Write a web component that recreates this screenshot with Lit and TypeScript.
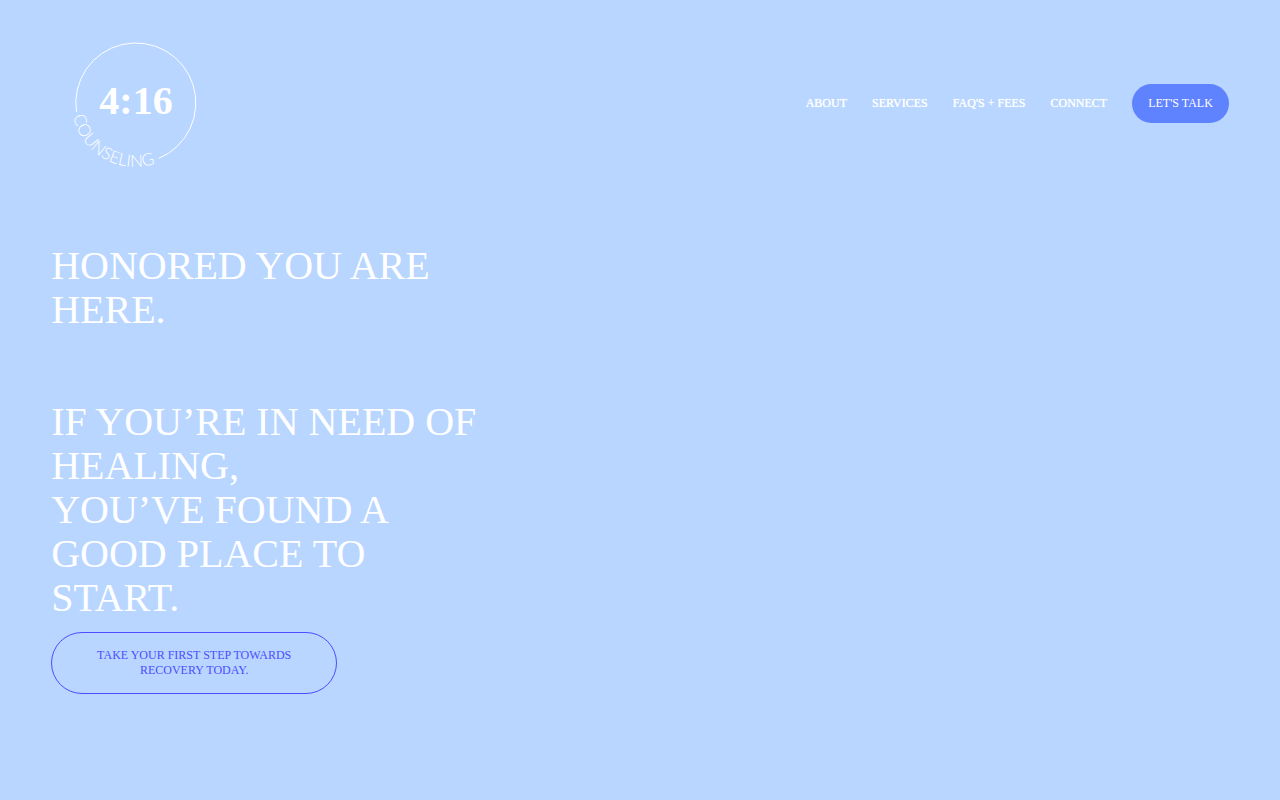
import { LitElement, html, css } from "lit";
import { customElement } from "lit/decorators.js";

@customElement("app-root")
export class AppRoot extends LitElement {
  static styles = css`
    :host {
      display: block;
      min-height: 100vh;
      background: #b8d6ff;
      color: #fff;
      font-family: "Liberation Serif", "Times New Roman", serif;
    }
    * { box-sizing: border-box; }
    a { color: inherit; text-decoration: none; }
    header {
      display: flex;
      align-items: center;
      justify-content: space-between;
      padding: 19px 4vw;
    }
    .logo { display: block; height: 168px; }
    .logo svg { display: block; }
    .digits { font-size: 40px; font-weight: 700; }
    .name { font-family: Lato, sans-serif; font-size: 17px; font-weight: 300; }
    nav {
      display: flex;
      align-items: center;
      gap: 25px;
      font-size: 12px;
      line-height: 15px;
    }
    .link { text-shadow: 0 0 1px #fff; }
    .talk {
      padding: 12px 16px;
      border-radius: 20px;
      background: #5f82ff;
    }
    main { padding: 38px 4vw; }
    .copy { width: 37%; min-width: 285px; }
    h1, h2 { margin: 0; font-size: 40px; line-height: 44px; font-weight: 400; }
    h2 { margin-top: 68px; }
    .start {
      display: block;
      width: 286px;
      margin-top: 12px;
      padding: 15px 40px;
      border: 1px solid #4b4dff;
      border-radius: 31px;
      color: #4b4dff;
      font-size: 12px;
      line-height: 15px;
      text-align: center;
    }
  `;

  private links = ["ABOUT", "SERVICES", "FAQ'S + FEES", "CONNECT"];

  render() {
    return html`
      <header>
        <a class="logo" href="#" aria-label="4:16 Counseling">
          <svg width="168" height="168" viewBox="51 19 168 168" fill="#fff">
            <path d="M76.500 112A60 60 0 1 1 158.500 158.500" fill="none" stroke="#fff" stroke-width="1" />
            <path id="arc" d="M72 104A63 63 0 0 0 180 148" fill="none" />
            <text class="digits" x="136" y="114" text-anchor="middle">4:16</text>
            <text class="name"><textPath href="#arc" startOffset="12">COUNSELING</textPath></text>
          </svg>
        </a>
        <nav aria-label="Main">
          ${this.links.map((l) => html`<a class="link" href="#">${l}</a>`)}
          <a class="talk" href="#">LET'S TALK</a>
        </nav>
      </header>
      <main>
        <div class="copy">
          <h1>HONORED YOU ARE HERE.</h1>
          <h2>IF YOU’RE IN NEED OF HEALING,<br />YOU’VE FOUND A GOOD PLACE TO START.</h2>
        </div>
        <a class="start" href="#">TAKE YOUR FIRST STEP TOWARDS RECOVERY TODAY.</a>
      </main>
    `;
  }
}
